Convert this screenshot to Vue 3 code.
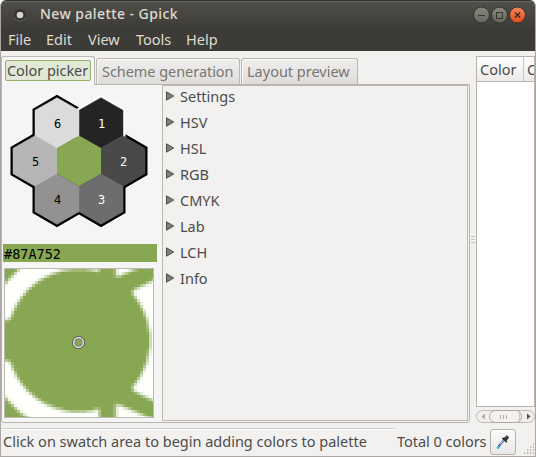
<script setup>
const menus = [
  { label: 'File', cls: 'm-file' },
  { label: 'Edit', cls: 'm-edit' },
  { label: 'View', cls: 'm-view' },
  { label: 'Tools', cls: 'm-tools' },
  { label: 'Help', cls: 'm-help' }
]
const sections = ['Settings', 'HSV', 'HSL', 'RGB', 'CMYK', 'Lab', 'LCH', 'Info']

const hex = (cx, cy) =>
  [[0, -25.3], [22, -12.65], [22, 12.65], [0, 25.3], [-22, 12.65], [-22, -12.65]]
    .map(([x, y]) => `${cx + x},${cy + y}`)
    .join(' ')

const swatches = [
  { n: '1', x: 101, y: 38, fill: '#242424', ink: '#fff' },
  { n: '2', x: 123, y: 76, fill: '#494949', ink: '#fff' },
  { n: '3', x: 101, y: 114, fill: '#6d6d6d', ink: '#fff' },
  { n: '4', x: 57, y: 114, fill: '#929292', ink: '#000' },
  { n: '5', x: 35, y: 76, fill: '#b6b6b6', ink: '#000' },
  { n: '6', x: 57, y: 38, fill: '#dbdbdb', ink: '#000' }
]

// Magnified screen area: true where the sampled point is white
function isWhite(x, y) {
  const d = Math.hypot(x - 73.5, y - 71.5)
  if (d < 71.5) return false
  const v = Math.abs(y - 71.5)
  if (x < 94) return d < 92.5 && v > 20.5
  if (x < 111) return false
  if (v > 63 + (x - 111) * 0.43) return true
  return x > 127.5 && v < 50 + (x - 128) * 0.5
}
const cells = []
for (let r = 0; r < 50; r++) {
  for (let c = 0; c < 50; c++) {
    const w = c < 49 ? 3 : 1
    const h = r < 49 ? 3 : 1
    let k = 0
    for (let i = 0; i < 5; i++)
      for (let j = 0; j < 5; j++)
        if (isWhite(c * 3 - 0.5 + i, r * 3 - 0.5 + j)) k++
    if (k) {
      const t = k / 25
      const m = (a, b) => Math.round(a + (b - a) * t)
      cells.push({ x: c * 3, y: r * 3, w, h, f: `rgb(${m(135, 255)},${m(167, 255)},${m(82, 252)})` })
    }
  }
}
</script>

<template>
  <div class="window">
    <header class="top">
      <div class="title">
        <svg class="dot" width="14" height="14" viewBox="0 0 14 14">
          <circle cx="7" cy="7" r="6" fill="#353430" />
          <path d="M1.5 9.5A6 6 0 0 0 12.5 9.5" fill="none" stroke="#5c5b56" />
          <circle cx="7" cy="7" r="3.3" fill="#d8d5cd" />
        </svg>
        <span class="name">New palette - Gpick</span>
        <svg class="controls" width="54" height="18" viewBox="0 0 54 18">
          <defs>
            <linearGradient id="gray" x1="0" y1="0" x2="0" y2="1">
              <stop offset="0" stop-color="#8a8981" /><stop offset="1" stop-color="#65645e" />
            </linearGradient>
            <linearGradient id="red" x1="0" y1="0" x2="0" y2="1">
              <stop offset="0" stop-color="#f5845e" /><stop offset="1" stop-color="#df4a1b" />
            </linearGradient>
          </defs>
          <g stroke="#32312d">
            <circle cx="9.5" cy="9" r="8" fill="url(#gray)" />
            <circle cx="27.5" cy="9" r="8" fill="url(#gray)" />
            <circle cx="45.5" cy="9" r="8" fill="url(#red)" />
          </g>
          <path d="M6 9.5H13" stroke="#373631" />
          <rect x="24.5" y="6.5" width="6" height="6" fill="none" stroke="#373631" />
          <path d="M43 6.5L48 11.5M48 6.5L43 11.5" stroke="#40241b" stroke-width="1.4" />
        </svg>
      </div>
      <nav class="menu">
        <span v-for="m in menus" :key="m.label" :class="m.cls">{{ m.label }}</span>
      </nav>
    </header>

    <main class="body">
      <section class="notebook">
        <div class="tabs">
          <div class="tab active"><span>Color picker</span></div>
          <div class="tab t2">Scheme generation</div>
          <div class="tab t3">Layout preview</div>
        </div>
        <div class="page">
          <div class="picker">
            <svg class="hexes" width="160" height="158" viewBox="0 0 160 158">
              <polygon v-for="s in swatches.slice(1)" :key="'b' + s.n" :points="hex(s.x, s.y)" stroke="#000" stroke-width="5" />
              <polygon :points="hex(101, 38)" stroke="#fff" stroke-width="5" />
              <polygon v-for="s in swatches" :key="s.n" :points="hex(s.x, s.y)" :fill="s.fill" :stroke="s.fill" stroke-width=".5" />
              <polygon :points="hex(79, 76)" fill="#87a752" />
              <text v-for="s in swatches" :key="'t' + s.n" :x="s.x + .5" :y="s.y + 4.5" :fill="s.ink">{{ s.n }}</text>
            </svg>
            <div class="code">#87A752</div>
            <svg class="zoom" width="150" height="150" viewBox="0 0 150 150">
              <rect x=".5" y=".5" width="149" height="149" fill="#87a752" stroke="#bcb9b3" />
              <g transform="translate(1 1)" shape-rendering="crispEdges">
                <rect v-for="(c, i) in cells" :key="i" :x="c.x" :y="c.y" :width="c.w" :height="c.h" :fill="c.f" />
              </g>
              <path d="M149.5 1V149.5H1" fill="none" stroke="#bcb9b3" />
              <circle cx="74.5" cy="74.5" r="5" fill="none" stroke="#4e4e4e" stroke-width="3" />
              <circle cx="74.5" cy="74.5" r="4.8" fill="none" stroke="#dedede" stroke-width="1.7" />
            </svg>
          </div>
          <div class="sections">
            <div v-for="s in sections" :key="s" class="row">
              <svg width="10" height="10" viewBox="0 0 10 10">
                <path d="M1.5 .8V9.2L8.7 5Z" fill="#7f7f7d" stroke="#4d4d4c" />
              </svg>
              <span>{{ s }}</span>
            </div>
          </div>
        </div>
      </section>
      <div class="grip"><i></i><i></i><i></i></div>
      <section class="side">
        <div class="list">
          <div class="head"><span class="c1">Color</span><span class="c2">Color name</span></div>
        </div>
        <svg class="bar" width="59" height="14" viewBox="0 0 59 14">
          <rect x=".5" y=".5" width="58" height="12" rx="6" fill="#f0efed" stroke="#bdbab4" />
          <rect x="13.5" y=".5" width="32" height="12" rx="6" fill="#f3f2f1" stroke="#aaa7a0" />
          <path d="M43.5 1V12" stroke="#c9c6c1" />
          <path d="M24.5 5V9M27.5 5V9M30.5 5V9" stroke="#b5b3ae" />
          <path d="M9 3.5V9.5L5.5 6.5Z" fill="#aaa9a6" />
          <path d="M51 3.5V9.5L54.5 6.5Z" fill="#555" />
        </svg>
      </section>
    </main>

    <footer class="status">
      <div class="msg"><span>Click on swatch area to begin adding colors to palette</span></div>
      <span class="total">Total 0 colors</span>
      <div class="drop">
        <svg width="16" height="16" viewBox="0 0 16 16">
          <path d="M9 6L5 10.6L3.6 12.6" stroke="#5566b0" stroke-width="2.3" fill="none" />
          <path d="M9.2 5.5L5 10.2" stroke="#d6dcef" stroke-width="1" />
          <path d="M8 4.4L11.4 7.6" stroke="#2a2a2a" stroke-width="1.8" stroke-linecap="round" />
          <path d="M10.2 5.2L12 3.4" stroke="#303030" stroke-width="3.6" stroke-linecap="round" />
          <path d="M11 3.4L12.4 2.2" stroke="#777" />
          <circle cx="3.2" cy="13.5" r="1.5" fill="#31b9e5" />
        </svg>
      </div>
      <svg class="resize" width="12" height="12" viewBox="0 0 12 12">
        <path d="M10 1h1M7 4h4M4 7h7M1 10h10" stroke="#aaa7a1" stroke-width="1.3" stroke-dasharray="1.3 1.7" />
      </svg>
    </footer>
  </div>
</template>

<style>
body { margin: 0; background: #fff; }
</style>
<style scoped>
* { box-sizing: border-box; }
svg { display: block; flex: none; }
.window {
  width: 536px; height: 457px; display: flex; flex-direction: column; overflow: hidden;
  background: #f2f1f0; border: 1px solid #aaa6a1; border-width: 0 1px 1px 1px;
  border-radius: 6px 6px 0 0; color: #4c4c4c;
  font: 14.5px/18px "Noto Sans", "Open Sans", sans-serif; white-space: nowrap;
}
.top { height: 51px; flex: none; margin: 0 -1px; background: linear-gradient(#504f49, #3c3b37 28px); border-top: 1px solid #33322e; color: #dfdbd2; box-shadow: inset 0 1px #66655f; }
.title { height: 27px; display: flex; align-items: center; padding: 0 10px 0 13px; }
.name { margin: -2px 0 0 13px; font-size: 14px; font-weight: 500; letter-spacing: .43px; }
.controls { margin-left: auto; }
.menu { display: flex; padding: 2px 0 0 8px; }
.m-file { width: 38px; }
.m-edit { width: 42px; }
.m-view { width: 48px; }
.m-tools { width: 50px; }
.body { display: flex; height: 372px; flex: none; padding-top: 5px; }
.notebook { width: 469px; height: 367px; flex: none; }
.tabs { display: flex; align-items: flex-end; height: 28px; gap: 1px; position: relative; }
.tab { height: 26px; border: 1px solid #bab7b1; border-bottom: 0; border-radius: 3px 3px 0 0; background: linear-gradient(#f0efee, #dedcd9); box-shadow: inset 1px 1px #faf9f9; color: #777571; padding: 3px 0 0 5px; }
.tab.active { width: 94px; height: 29px; margin-bottom: -1px; background: #f6f6f6; padding: 3px; color: #4c4c4c; letter-spacing: -.05px; }
.active span { display: block; height: 21px; border: 1px solid #94b267; border-radius: 2px; background: #e1e8d6; padding: 0 0 0 1px; }
.t2 { width: 144px; letter-spacing: -.05px; }
.t3 { width: 117px; }
.page { height: 339px; border: 1px solid #b7b4ae; border-radius: 0 0 3px 3px; background: #f5f5f5; display: flex; justify-content: space-between; padding: 0 1px 1px; }
.picker { width: 154px; }
.hexes { margin-left: -3px; }
.hexes text { font: 12px "DejaVu Sans Mono", monospace; text-anchor: middle; }
.code { height: 18px; background: #87a752; color: #000; font: 13.5px/20px "DejaVu Sans Mono", monospace; padding-left: 1px; margin-top: 1px; }
.zoom { margin: 6px 0 0 1px; }
.sections { width: 306px; border: 1px solid #bbb8b2; background: #f2f1f0; padding-left: 2px; }
.row { height: 26px; display: flex; align-items: flex-start; }
.row svg { margin: 5px 5px 0 0; }
.row span { padding-top: 1px; }
.grip { width: 6px; display: flex; flex-direction: column; justify-content: center; gap: 2px; padding-left: 1px; }
.grip i { height: 1px; width: 4px; background: #c4c2be; }
.side { width: 59px; }
.list { height: 351px; border: 1px solid #b7b4ae; background: #fff; overflow: hidden; margin-bottom: 3px; }
.head { height: 25px; border-bottom: 1px solid #bab7b1; display: flex; background: linear-gradient(#fff, #ebeae8); line-height: 25px; }
.c1 { width: 47px; flex: none; padding-left: 3px; border-right: 1px solid #c7c5c0; }
.c2 { padding-left: 3px; }
.status { flex: 1; display: flex; position: relative; }
.msg { width: 395px; flex: none; padding: 5px 0 0 2px; }
.msg::before { content: ""; display: block; height: 1px; margin-left: -2px; background: #d0ceca; box-shadow: 0 1px #fff; }
.msg span { display: block; padding-top: 3px; }
.total { padding-top: 9px; margin-left: 1px; width: 93px; flex: none; letter-spacing: -.03px; }
.drop { width: 26px; height: 26px; margin-top: 6px; border: 1px solid #b5b2ac; border-radius: 3px; background: linear-gradient(#fbfbfa, #e9e8e6); padding: 4px; flex: none; }
.resize { margin: 20px 0 0 7px; }
</style>
